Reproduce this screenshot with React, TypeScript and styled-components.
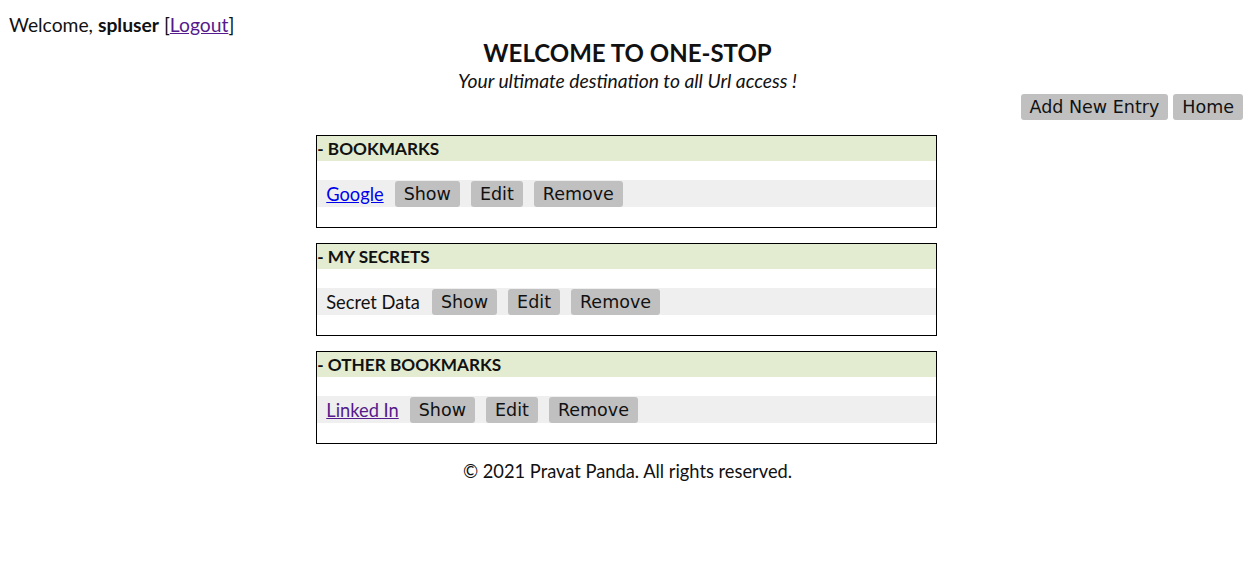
import React from "react";
import styled, { createGlobalStyle } from "styled-components";

const Global = createGlobalStyle`
  html, body { margin: 0; padding: 0; background: #fff; }
  body { margin: 8px; font-family: Lato, "Open Sans", sans-serif; color: #111; }
`;

const TopBar = styled.div`
  font-size: 19.3px;
  line-height: 24px;
  height: 24px;
  padding-top: 5px;
  padding-left: 1px;
  b { font-weight: 700; }
`;

const VLink = styled.a<{ $visited?: boolean }>`
  color: ${(p) => (p.$visited ? "#551a8b" : "#0000ee")};
  text-decoration: underline;
  cursor: pointer;
`;

const Title = styled.h1`
  margin: 2px 0 0;
  text-align: center;
  font-size: 24px;
  line-height: 28px;
  font-weight: 700;
`;

const Subtitle = styled.div`
  text-align: center;
  font-style: italic;
  font-size: 19.3px;
  line-height: 28px;
`;

const Actions = styled.div`
  display: flex;
  justify-content: flex-end;
  gap: 5px;
  padding-right: 4px;
  margin-top: -1px;
`;

const Btn = styled.button`
  font-family: "DejaVu Sans", sans-serif;
  font-size: 17.5px;
  line-height: 26px;
  height: 26px;
  padding: 0 9px;
  border: none;
  border-radius: 3px;
  background: #c0c0c0;
  color: #111;
  cursor: pointer;
`;

const Sections = styled.div`
  width: calc(50% + 1px);
  margin: 15px auto 0;
  display: flex;
  flex-direction: column;
  gap: 15px;
  transform: translateX(-1px);
`;

const Section = styled.div`
  border: 1px solid #000;
  padding-bottom: 20px;
`;

const SectionHead = styled.div`
  background: #e3ecd0;
  font-weight: 700;
  font-size: 17.2px;
  line-height: 25px;
  height: 25px;
`;

const Row = styled.div`
  margin-top: 19px;
  background: #efefef;
  height: 27px;
  display: flex;
  align-items: center;
  padding-left: 9px;
  gap: 11px;
  font-size: 18.3px;
`;

const Label = styled.span`
  margin-right: 1px;
`;

const Footer = styled.div`
  text-align: center;
  font-size: 18.3px;
  margin-top: 16px;
`;

type Entry = { title: string; item: string; link?: boolean; visited?: boolean };

const entries: Entry[] = [
  { title: "- BOOKMARKS", item: "Google", link: true },
  { title: "- MY SECRETS", item: "Secret Data" },
  { title: "- OTHER BOOKMARKS", item: "Linked In", link: true, visited: true },
];

export default function App() {
  return (
    <>
      <Global />
      <TopBar>
        Welcome, <b>spluser</b> [<VLink $visited>Logout</VLink>]
      </TopBar>
      <Title>WELCOME TO ONE-STOP</Title>
      <Subtitle>Your ultimate destination to all Url access !</Subtitle>
      <Actions>
        <Btn>Add New Entry</Btn>
        <Btn>Home</Btn>
      </Actions>
      <Sections>
        {entries.map((e) => (
          <Section key={e.title}>
            <SectionHead>{e.title}</SectionHead>
            <Row>
              {e.link ? (
                <VLink $visited={e.visited}>{e.item}</VLink>
              ) : (
                <Label>{e.item}</Label>
              )}
              <Btn>Show</Btn>
              <Btn>Edit</Btn>
              <Btn>Remove</Btn>
            </Row>
          </Section>
        ))}
      </Sections>
      <Footer>© 2021 Pravat Panda. All rights reserved.</Footer>
    </>
  );
}
